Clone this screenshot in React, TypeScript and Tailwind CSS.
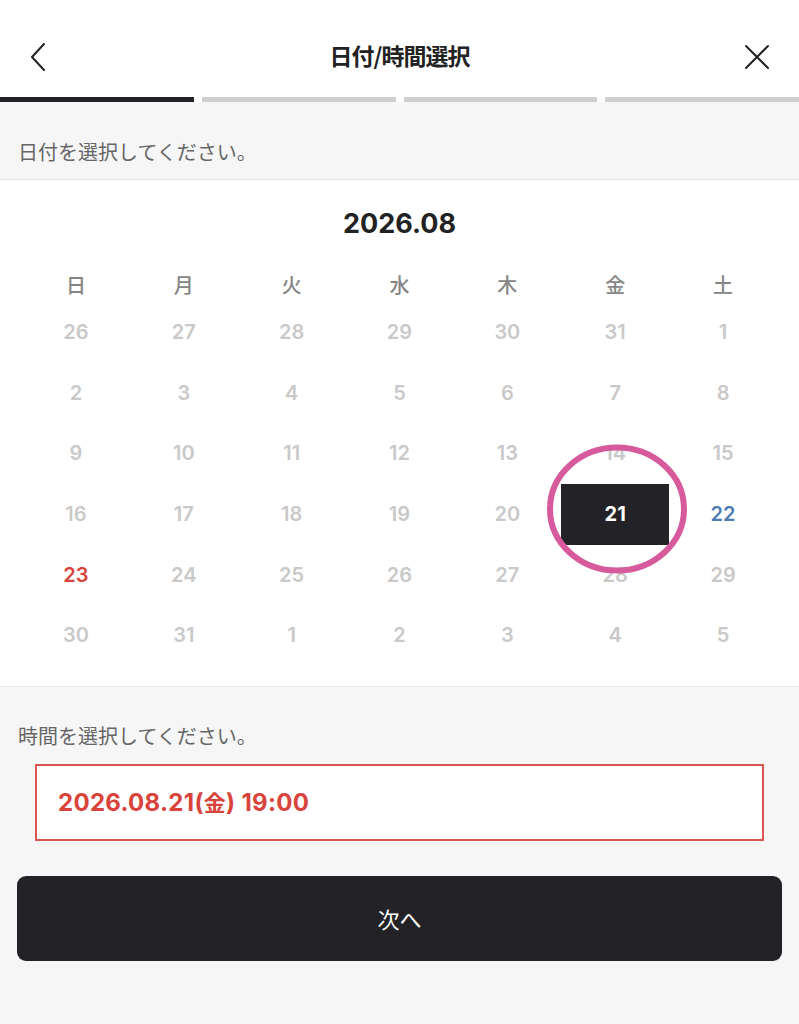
import React from "react";

const jp = { fontFamily: '"Noto Sans CJK JP", "Noto Sans", sans-serif' };
const num = { fontFamily: 'Inter, "Noto Sans CJK JP", sans-serif' };

const weekdays = ["日", "月", "火", "水", "木", "金", "土"];
const rows = [
  ["26", "27", "28", "29", "30", "31", "1"],
  ["2", "3", "4", "5", "6", "7", "8"],
  ["9", "10", "11", "12", "13", "14", "15"],
  ["16", "17", "18", "19", "20", "21", "22"],
  ["23", "24", "25", "26", "27", "28", "29"],
  ["30", "31", "1", "2", "3", "4", "5"],
];

export default function App() {
  return (
    <div className="w-[799px] h-[1024px] bg-[#f6f6f6] flex flex-col overflow-hidden" style={jp}>
      {/* Header */}
      <div className="bg-white h-[97px] pt-[15px] shrink-0">
        <div className="relative h-[80px] flex items-center justify-center">
          <svg className="absolute left-[26px] top-[28px]" width="24" height="28" viewBox="0 0 24 28" fill="none">
            <path d="M18 1 L6 14 L18 27" stroke="#222" strokeWidth="2" strokeLinecap="round" strokeLinejoin="round" />
          </svg>
          <div className="text-[23px] font-bold text-[#222] tracking-[-1px]">日付/時間選択</div>
          <svg className="absolute left-[744px] top-[29px]" width="26" height="26" viewBox="0 0 26 26" fill="none">
            <path d="M2 2 L24 24 M24 2 L2 24" stroke="#222" strokeWidth="2" strokeLinecap="round" />
          </svg>
        </div>
      </div>
      {/* Progress */}
      <div className="flex gap-[8px] h-[5px] bg-white shrink-0">
        <div className="flex-1 bg-[#222226]" />
        <div className="flex-1 bg-[#cfcfcf]" />
        <div className="flex-1 bg-[#cfcfcf]" />
        <div className="flex-1 bg-[#cfcfcf]" />
      </div>
      {/* Date prompt */}
      <div className="h-[78px] border-b border-[#e6e6e6] flex items-center pl-[18px] pt-[22px] shrink-0">
        <span className="text-[20px] text-[#666]">日付を選択してください。</span>
      </div>
      {/* Calendar */}
      <div className="bg-white border-b border-[#e6e6e6] h-[507px] shrink-0 pt-[26px] px-[22px] relative">
        <div className="text-center text-[27px] font-bold text-[#222] leading-[36px]" style={num}>2026.08</div>
        <div className="grid grid-cols-7 mt-[26px]">
          {weekdays.map((w) => (
            <div key={w} className="h-[34px] flex items-center justify-center text-[20px] font-medium text-[#858585]">
              {w}
            </div>
          ))}
        </div>
        <div className="grid grid-cols-7">
          {rows.flat().map((d, i) => {
            const selected = i === 26;
            let color = "text-[#c9c9c9]";
            if (i === 27) color = "text-[#4b7db3]";
            if (i === 28) color = "text-[#d8433b]";
            return (
              <div key={i} className="h-[60.6px] flex items-center justify-center">
                {selected ? (
                  <div className="w-[108px] h-[61px] bg-[#232327] flex items-center justify-center text-white text-[20px] font-bold" style={num}>
                    {d}
                  </div>
                ) : (
                  <span className={`text-[20px] font-semibold ${color}`} style={num}>
                    {d}
                  </span>
                )}
              </div>
            );
          })}
        </div>
        <svg className="absolute left-[545px] top-[263px] pointer-events-none" width="144" height="132" viewBox="0 0 144 132" fill="none">
          <ellipse cx="72" cy="66" rx="67" ry="61.5" stroke="#d65a9c" strokeWidth="6" />
        </svg>
      </div>
      {/* Time */}
      <div className="pl-[18px] pt-[34px] text-[20px] text-[#666] leading-[30px]">時間を選択してください。</div>
      <div className="mx-[35px] mt-[13px] h-[77px] bg-white border-2 border-[#db5551] flex items-center pl-[21px]">
        <span className="text-[24px] font-bold text-[#d8433b] tracking-[0.3px]" style={num}>
          2026.08.21(<span style={jp} className="text-[22px]">金</span>) 19:00
        </span>
      </div>
      <button className="mx-[17px] mt-[35px] h-[85px] rounded-[9px] bg-[#232327] flex items-center justify-center text-white text-[22px]">
        次へ
      </button>
    </div>
  );
}
